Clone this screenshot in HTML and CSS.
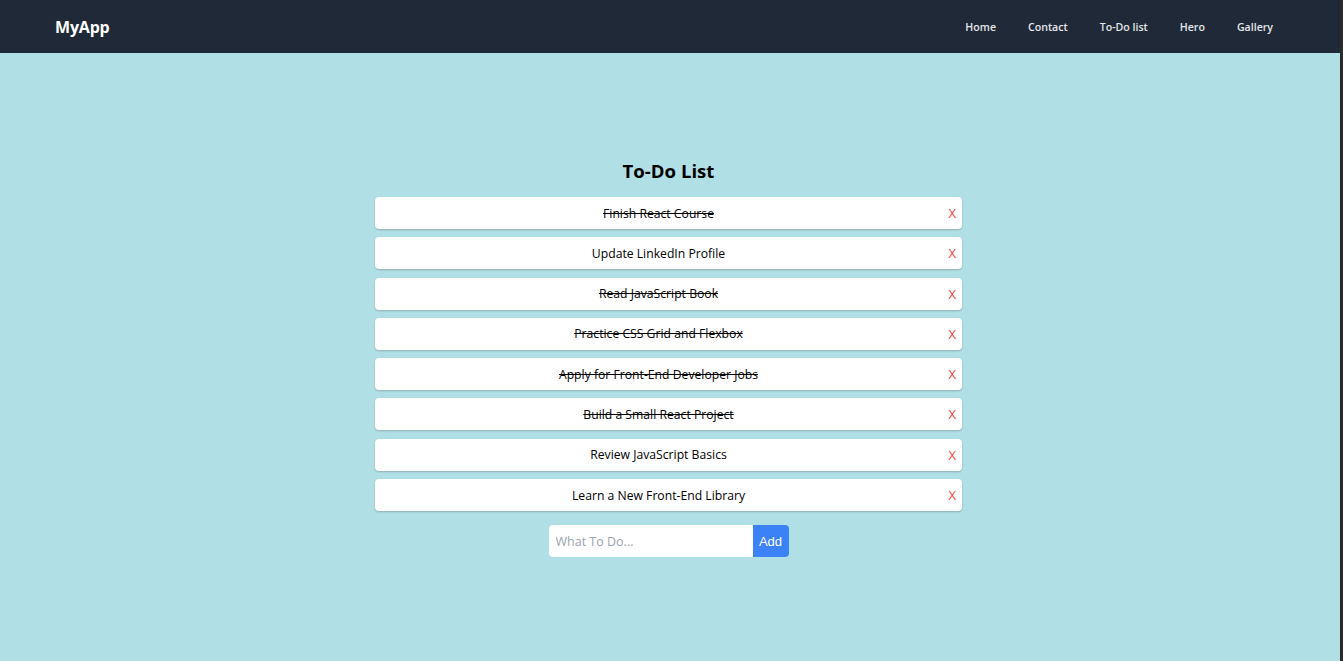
FILE: index.html
```html
<!DOCTYPE html>
<html lang="en">
<head>
<meta charset="utf-8">
<title>MyApp</title>
<link rel="stylesheet" href="styles.css">
</head>
<body>
<div class="window">
  <nav class="navbar">
    <a class="brand" href="#">MyApp</a>
    <ul class="nav-links">
      <li><a href="#">Home</a></li>
      <li><a href="#">Contact</a></li>
      <li><a href="#">To-Do list</a></li>
      <li><a href="#">Hero</a></li>
      <li><a href="#">Gallery</a></li>
    </ul>
  </nav>
  <main class="content">
    <section class="todo">
      <h2 class="todo-title">To-Do List</h2>
      <ul class="todo-list">
        <li class="todo-item"><span class="todo-text done">Finish React Course</span><button class="todo-remove">X</button></li>
        <li class="todo-item"><span class="todo-text">Update LinkedIn Profile</span><button class="todo-remove">X</button></li>
        <li class="todo-item"><span class="todo-text done">Read JavaScript Book</span><button class="todo-remove">X</button></li>
        <li class="todo-item"><span class="todo-text done">Practice CSS Grid and Flexbox</span><button class="todo-remove">X</button></li>
        <li class="todo-item"><span class="todo-text done">Apply for Front-End Developer Jobs</span><button class="todo-remove">X</button></li>
        <li class="todo-item"><span class="todo-text done">Build a Small React Project</span><button class="todo-remove">X</button></li>
        <li class="todo-item"><span class="todo-text">Review JavaScript Basics</span><button class="todo-remove">X</button></li>
        <li class="todo-item"><span class="todo-text">Learn a New Front-End Library</span><button class="todo-remove">X</button></li>
      </ul>
      <form class="todo-form">
        <input class="todo-input" type="text" placeholder="What To Do...">
        <button class="todo-add" type="button">Add</button>
      </form>
    </section>
  </main>
</div>
</body>
</html>
```
FILE: styles.css
```css
* { box-sizing: border-box; }
html, body { margin: 0; padding: 0; height: 100%; }
body {
  font-family: "Open Sans", "Noto Sans", sans-serif;
  background: #2b2b2b;
}
.window {
  min-height: 100vh;
  margin-right: 3px;
  background: #b0dfe5;
  display: flex;
  flex-direction: column;
}
.navbar {
  height: 53px;
  background: #1f2937;
  display: flex;
  align-items: center;
  justify-content: space-between;
  padding: 0 51px 0 55px;
}
.brand {
  color: #ffffff;
  font-weight: 700;
  font-size: 16px;
  text-decoration: none;
  letter-spacing: -0.2px;
}
.nav-links {
  list-style: none;
  display: flex;
  margin: 0;
  padding: 0;
}
.nav-links a {
  display: block;
  padding: 0 16px;
  color: #e5e7eb;
  font-size: 10.6px;
  font-weight: 600;
  text-decoration: none;
}
.content {
  flex: 1;
  display: flex;
  justify-content: center;
  padding: 100px 3px 0 0;
}
.todo {
  width: 587px;
  display: flex;
  flex-direction: column;
  align-items: center;
}
.todo-title {
  margin: 0 0 8px;
  font-size: 18.6px;
  line-height: 36px;
  font-weight: 700;
  color: #000;
}
.todo-list {
  list-style: none;
  margin: 0;
  padding: 0;
  width: 100%;
}
.todo-item {
  display: flex;
  align-items: center;
  background: #fff;
  border-radius: 4px;
  box-shadow: 0 1px 2px rgba(0, 0, 0, 0.22);
  padding: 0 0 0 8px;
  height: 32px;
  margin-bottom: 8.3px;
}
.todo-text {
  flex: 1;
  text-align: center;
  font-size: 12.2px;
  color: #000;
}
.todo-text.done { text-decoration: line-through; }
.todo-remove {
  border: 0;
  background: none;
  color: #ef4444;
  font-family: "Open Sans", sans-serif;
  font-size: 13px;
  padding: 0 6px 0 0;
  width: 28px;
  text-align: right;
  cursor: pointer;
}
.todo-form {
  display: flex;
  margin-top: 6px;
}
.todo-input {
  width: 204px;
  height: 32px;
  border: 0;
  border-radius: 4px 0 0 4px;
  padding: 0 7px;
  font-family: "Open Sans", sans-serif;
  font-size: 12.5px;
  outline: none;
}
.todo-input::placeholder { color: #9ca3af; }
.todo-add {
  width: 36px;
  height: 32px;
  border: 0;
  border-radius: 0 4px 4px 0;
  background: #3b82f6;
  color: #fff;
  font-family: "Liberation Sans", Arial, sans-serif;
  font-size: 13px;
  padding: 0;
}
```
